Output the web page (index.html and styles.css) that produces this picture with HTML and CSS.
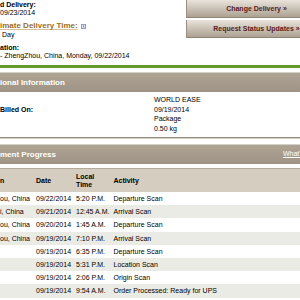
FILE: index.html
```html
<!DOCTYPE html>
<html lang="en">

<head>
  <meta charset="UTF-8" />
  <meta name="viewport" content="width=device-width, initial-scale=1.0" />
  <title>Tracking Detail</title>
  <link rel="stylesheet" href="styles.css">
</head>

<body>
  <div class="page">
    <div class="summary">
      <div class="delivery">
        <div class="block">
          <div class="label">d Delivery:</div>
          <div class="value">09/23/2014</div>
        </div>
        <div class="block">
          <div class="label estimate">
            <a href="#" class="est-link">imate Delivery Time:</a>
            <svg class="help-icon" width="5" height="5" viewBox="0 0 5 5">
              <rect x="0.5" y="0.5" width="4" height="4" fill="#dfe6f3" stroke="#8c9ec6" stroke-width="1" />
              <rect x="2" y="1.5" width="1" height="2" fill="#7d90bb" />
            </svg>
          </div>
          <div class="value">&nbsp;Day</div>
        </div>
        <div class="block">
          <div class="label">ation:</div>
          <div class="value">- ZhengZhou, China, Monday, 09/22/2014</div>
        </div>
      </div>
      <div class="actions">
        <a href="#" class="action-btn">Change Delivery &raquo;</a>
        <a href="#" class="action-btn">Request Status Updates &raquo;</a>
      </div>
    </div>

    <div class="rule"></div>

    <div class="panel">
      <div class="panel-head">
        <span>ional Information</span>
      </div>
      <div class="info-grid">
        <div class="info-label"></div>
        <div>WORLD EASE</div>
        <div class="info-label">Billed On:</div>
        <div>09/19/2014</div>
        <div class="info-label"></div>
        <div>Package</div>
        <div class="info-label"></div>
        <div>0.50 kg</div>
      </div>
    </div>

    <div class="panel progress">
      <div class="panel-head">
        <span>ment Progress</span>
        <a href="#" class="whats-this">What's This?</a>
      </div>
      <div class="progress-head">
        <div>n</div>
        <div>Date</div>
        <div>Local<br>Time</div>
        <div>Activity</div>
      </div>
      <div class="progress-rows">
        <div class="row"><div>ou, China</div><div>09/22/2014</div><div>5:20 P.M.</div><div>Departure Scan</div></div>
        <div class="row"><div>i, China</div><div>09/21/2014</div><div>12:45 A.M.</div><div>Arrival Scan</div></div>
        <div class="row"><div>ou, China</div><div>09/20/2014</div><div>1:45 A.M.</div><div>Departure Scan</div></div>
        <div class="row"><div>ou, China</div><div>09/19/2014</div><div>7:10 P.M.</div><div>Arrival Scan</div></div>
        <div class="row"><div></div><div>09/19/2014</div><div>6:35 P.M.</div><div>Departure Scan</div></div>
        <div class="row"><div></div><div>09/19/2014</div><div>5:31 P.M.</div><div>Location Scan</div></div>
        <div class="row"><div></div><div>09/19/2014</div><div>2:06 P.M.</div><div>Origin Scan</div></div>
        <div class="row"><div></div><div>09/19/2014</div><div>9:54 A.M.</div><div>Order Processed: Ready for UPS</div></div>
      </div>
    </div>
  </div>
</body>

</html>
```

FILE: styles.css
```css
* {
  margin: 0;
  padding: 0;
  box-sizing: border-box;
}

body {
  background-color: #fff;
  color: #000;
  font-family: "Liberation Sans", Arial, sans-serif;
  font-size: 7px;
  overflow: hidden;
}

.page {
  width: 326px;
}

/* top summary */
.summary {
  display: flex;
  height: 65px;
}

.delivery {
  flex: 1;
  padding-top: 0.75px;
  white-space: nowrap;
}

.block + .block {
  margin-top: 4.5px;
}

.label, .value {
  line-height: 8.5px;
}

.label {
  font-weight: bold;
}

.estimate {
  font-size: 8px;
}

.est-link {
  color: #9b6f1f;
  text-decoration: underline;
  text-decoration-color: #d2c29e;
}

.help-icon {
  vertical-align: -0.5px;
  margin-left: 1px;
}

.actions {
  width: 140px;
  display: flex;
  flex-direction: column;
  gap: 2.5px;
}

.action-btn {
  display: block;
  height: 17.5px;
  line-height: 17px;
  text-align: center;
  font-weight: bold;
  color: #5a1b1b;
  text-decoration: none;
  white-space: nowrap;
  background: linear-gradient(#e9e3db, #aca191);
  border-left: 1px solid #9a8f80;
  border-bottom: 1px solid #8f8576;
}

.rule {
  height: 3px;
  background-color: #64992c;
  margin-bottom: 4px;
}

/* panels */
.panel-head {
  height: 20px;
  display: flex;
  align-items: center;
  justify-content: space-between;
  background: linear-gradient(#afa494, #9e9384);
  border-top: 1px solid #d5d0c9;
  color: #fff;
  font-size: 8px;
  font-weight: bold;
  white-space: nowrap;
}

.whats-this {
  color: #fff;
  font-size: 7px;
  font-weight: normal;
  padding-right: 3px;
  margin-bottom: 3px;
}

.info-grid {
  display: grid;
  grid-template-columns: 154px 1fr;
  line-height: 9.5px;
  padding: 3px 0 4px;
  border-bottom: 1px solid #968b7c;
  box-shadow: 0 1px 0 #d6d1ca;
  margin-bottom: 6px;
}

.info-label {
  font-weight: bold;
}

.progress .panel-head {
  margin-bottom: 4px;
}

.progress-head, .row {
  display: grid;
  grid-template-columns: 36px 40px 37.5px 1fr;
  align-items: center;
  white-space: nowrap;
}

.progress-head {
  height: 24px;
  background-color: #d6cdc1;
  border-top: 1px solid #b3a99b;
  font-weight: bold;
  line-height: 8px;
}

.row {
  height: 13.2px;
}

.row:nth-child(even) {
  background-color: #ebebe5;
}
```
